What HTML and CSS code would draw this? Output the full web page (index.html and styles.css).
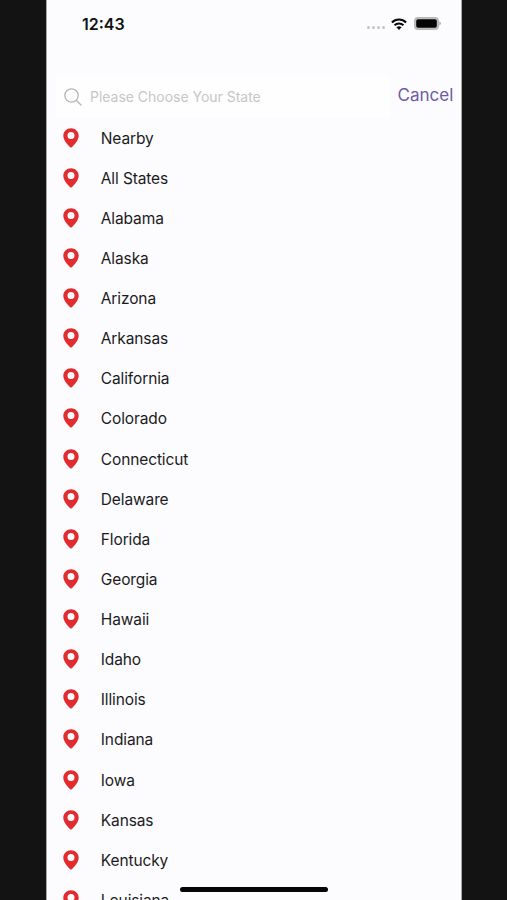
FILE: index.html
```html
<!DOCTYPE html>
<html lang="en">
<head>
<meta charset="utf-8">
<title>Choose Your State</title>
<link rel="stylesheet" href="styles.css">
</head>
<body>
<svg class="defs" aria-hidden="true">
  <symbol id="pin" viewBox="0 0 16 20">
    <path fill="#e02b2f" fill-rule="evenodd" d="M8 0.2C3.7 0.2 .3 3.5 .3 7.7C.3 12.2 4.6 16.8 7.2 19.2Q8 19.9 8.8 19.2C11.4 16.8 15.7 12.2 15.7 7.7C15.7 3.5 12.3 .2 8 .2ZM8 4a3.5 3.5 0 1 1 0 7a3.5 3.5 0 1 1 0-7Z"/>
  </symbol>
</svg>
<main class="phone">
  <header class="status">
    <span class="time">12:43</span>
    <div class="indicators">
      <span class="dots"><i></i><i></i><i></i><i></i></span>
      <svg class="wifi" viewBox="0 0 16 12" width="16" height="12">
        <g fill="none" stroke="#080808" stroke-width="2">
          <path d="M.9 4.5C4.9.6 11.1.6 15.1 4.5"/>
          <path d="M3.5 7.3C6 4.9 10 4.9 12.5 7.3"/>
        </g>
        <path fill="#080808" d="M5.4 9.2Q8 7.2 10.6 9.2L8 12Z"/>
      </svg>
      <svg class="battery" viewBox="0 0 27 13" width="27" height="13">
        <rect x=".7" y=".7" width="23.6" height="11.6" rx="3.4" fill="#c4c4c5" stroke="#b8b8b9" stroke-width="1.4"/>
        <rect x="2.2" y="2.2" width="20.6" height="8.6" rx="1.8" fill="#050505"/>
        <path d="M25.3 4.6Q27 5.2 27 6.5T25.3 8.4Z" fill="#adadae"/>
      </svg>
    </div>
  </header>
  <div class="search-row">
    <div class="search">
      <svg viewBox="0 0 18 18" width="18" height="18" fill="none" stroke="#b5b5b7" stroke-width="1.3" stroke-linecap="round">
        <circle cx="7.5" cy="7.5" r="6.7"/><path d="M12.3 12.3L17 17"/>
      </svg>
      <span class="placeholder">Please Choose Your State</span>
    </div>
    <span class="cancel">Cancel</span>
  </div>
  <ul class="states">
    <li><svg class="pin"><use href="#pin"/></svg><span>Nearby</span></li>
    <li><svg class="pin"><use href="#pin"/></svg><span>All States</span></li>
    <li><svg class="pin"><use href="#pin"/></svg><span>Alabama</span></li>
    <li><svg class="pin"><use href="#pin"/></svg><span>Alaska</span></li>
    <li><svg class="pin"><use href="#pin"/></svg><span>Arizona</span></li>
    <li><svg class="pin"><use href="#pin"/></svg><span>Arkansas</span></li>
    <li><svg class="pin"><use href="#pin"/></svg><span>California</span></li>
    <li><svg class="pin"><use href="#pin"/></svg><span>Colorado</span></li>
    <li><svg class="pin"><use href="#pin"/></svg><span>Connecticut</span></li>
    <li><svg class="pin"><use href="#pin"/></svg><span>Delaware</span></li>
    <li><svg class="pin"><use href="#pin"/></svg><span>Florida</span></li>
    <li><svg class="pin"><use href="#pin"/></svg><span>Georgia</span></li>
    <li><svg class="pin"><use href="#pin"/></svg><span>Hawaii</span></li>
    <li><svg class="pin"><use href="#pin"/></svg><span>Idaho</span></li>
    <li><svg class="pin"><use href="#pin"/></svg><span>Illinois</span></li>
    <li><svg class="pin"><use href="#pin"/></svg><span>Indiana</span></li>
    <li><svg class="pin"><use href="#pin"/></svg><span>Iowa</span></li>
    <li><svg class="pin"><use href="#pin"/></svg><span>Kansas</span></li>
    <li><svg class="pin"><use href="#pin"/></svg><span>Kentucky</span></li>
    <li><svg class="pin"><use href="#pin"/></svg><span>Louisiana</span></li>
  </ul>
  <div class="home-bar"></div>
</main>
</body>
</html>
```
FILE: styles.css
```css
* { box-sizing: border-box; }
body {
  margin: 0;
  height: 900px;
  overflow: hidden;
  display: flex;
  background: #131313;
  font-family: Inter, "Liberation Sans", sans-serif;
  color: #1b1b1d;
}
.defs { display: none; }
svg { flex: none; display: block; }
.phone {
  position: relative;
  width: 416px;
  height: 900px;
  margin-left: 46px;
  overflow: hidden;
  background: #fcfcfe;
  border-left: 1px solid #a8a8a8;
  border-right: 1px solid #a8a8a8;
}
.status {
  height: 76px;
  padding: 13px 20px 0 35px;
  display: flex;
  justify-content: space-between;
  align-items: flex-start;
}
.time {
  font-size: 16px;
  line-height: 22px;
  font-weight: 600;
  color: #111;
}
.indicators { display: flex; align-items: center; height: 21px; }
.dots { display: flex; gap: 2px; margin: 8px 6px 0 0; }
.dots i { width: 3px; height: 3px; border-radius: 50%; background: #c3c3c5; }
.wifi { margin-right: 7px; }
.search-row { display: flex; height: 42px; padding-left: 9px; }
.search {
  width: 334px;
  height: 42px;
  padding-left: 8px;
  display: flex;
  align-items: center;
  background: #fefefe;
}
.placeholder {
  margin-left: 8px;
  font-size: 14px;
  line-height: 20px;
  letter-spacing: -0.02px;
  color: #c6c6c8;
  white-space: nowrap;
}
.cancel {
  margin-left: 7.5px;
  font-size: 17px;
  line-height: 38px;
  color: #6b5ba8;
}
.states { list-style: none; margin: 0; padding: 0; }
.states li {
  height: 40.13px;
  padding-left: 15.5px;
  display: flex;
  align-items: center;
  font-size: 15.5px;
  line-height: 20px;
  letter-spacing: -0.12px;
}
.states span { padding-top: 1px; }
.pin { width: 16px; height: 20px; margin: 0 22.3px 1px 0; }
.home-bar {
  position: absolute;
  left: 133px;
  top: 887px;
  width: 148px;
  height: 5px;
  border-radius: 3px;
  background: #050505;
}
```
